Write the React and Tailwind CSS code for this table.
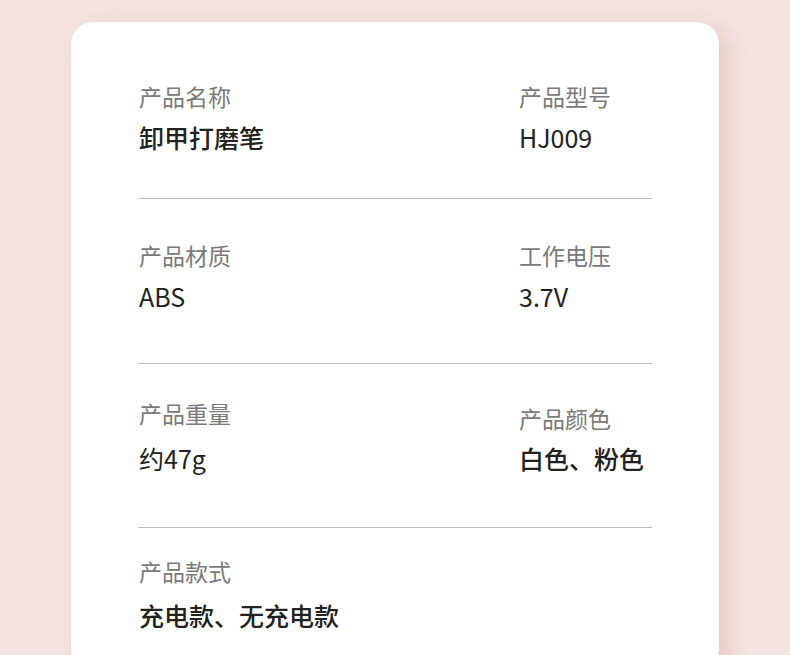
const rows = [
  {
    pad: "pt-[58px] pb-[44px]",
    cells: [
      { label: "产品名称", value: "卸甲打磨笔", gap: "mt-[8px]", bold: true },
      { label: "产品型号", value: "HJ009", gap: "mt-[8px]" },
    ],
  },
  {
    pad: "pt-[40px] pb-[50px]",
    cells: [
      { label: "产品材质", value: "ABS", gap: "mt-[8px]" },
      { label: "工作电压", value: "3.7V", gap: "mt-[8px]" },
    ],
  },
  {
    pad: "pt-[33px] pb-[52px]",
    cells: [
      { label: "产品重量", value: "约47g", gap: "mt-[12px]" },
      { label: "产品颜色", value: "白色、粉色", gap: "mt-[7px]", top: "pt-[5px]", bold: true },
    ],
  },
  {
    pad: "pt-[27px] pb-[40px]",
    last: true,
    cells: [{ label: "产品款式", value: "充电款、无充电款", gap: "mt-[11px]", bold: true }],
  },
];

function Cell({ label, value, gap, top, bold }) {
  return (
    <div className={top}>
      <p className="text-[23px] leading-[32px] text-[#7a7a7a]">{label}</p>
      <p
        className={`${gap} text-[25px] leading-[34px] text-[#222222] ${
          bold ? "font-medium" : "font-normal"
        }`}
      >
        {value}
      </p>
    </div>
  );
}

export default function App() {
  return (
    <div
      className="min-h-[655px] w-full overflow-hidden bg-[#f5e4e1] pt-[22px] pl-[71px]"
      style={{ fontFamily: '"Noto Sans CJK SC", "Noto Sans", sans-serif' }}
    >
      <div className="w-[648px] rounded-[22px] bg-white px-[67px] shadow-[10px_6px_22px_rgba(200,150,140,0.35)]">
        {rows.map((row, i) => (
          <div key={i} className={row.last ? "" : "border-b border-[#bdbdbd]"}>
            <div className={`grid grid-cols-[380px_1fr] px-[1px] ${row.pad}`}>
              {row.cells.map((c) => (
                <Cell key={c.label} {...c} />
              ))}
            </div>
          </div>
        ))}
      </div>
    </div>
  );
}
